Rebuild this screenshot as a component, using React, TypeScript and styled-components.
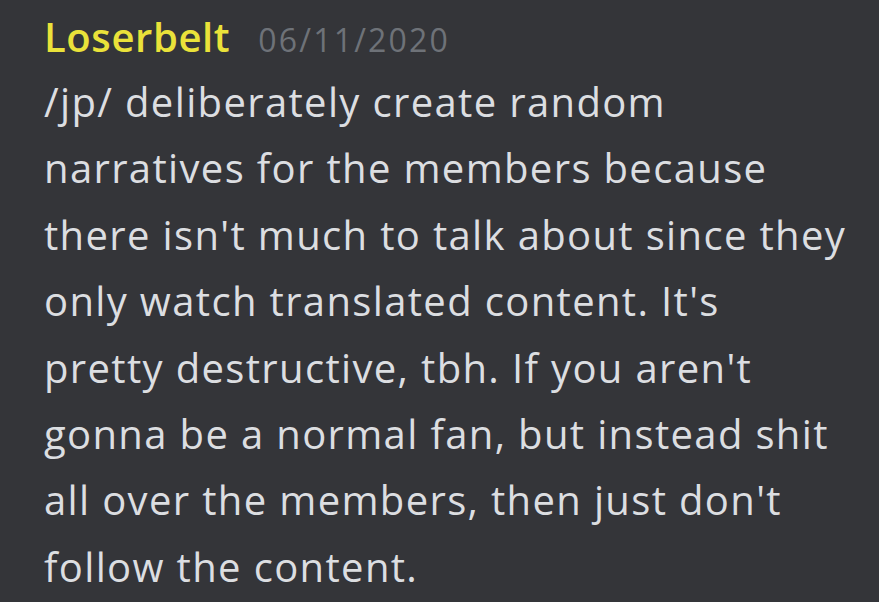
import React from "react";
import styled, { createGlobalStyle } from "styled-components";

const Global = createGlobalStyle`
  html, body { margin: 0; padding: 0; background: #343539; }
  body { width: 879px; height: 602px; overflow: hidden; }
`;

const Message = styled.div`
  box-sizing: border-box;
  width: 879px;
  height: 602px;
  padding: 9px 0 0 44px;
  background: #343539;
  font-family: "Open Sans", Lato, sans-serif;
  font-variant-ligatures: none;
  display: flex;
  flex-direction: column;
`;

const Header = styled.div`
  display: flex;
  align-items: baseline;
  gap: 28px;
  height: 56px;
`;

const Username = styled.span`
  color: #eae23a;
  font-size: 40px;
  font-weight: 600;
  letter-spacing: 0.6px;
`;

const Timestamp = styled.span`
  color: #6e7278;
  font-size: 32px;
  font-weight: 500;
  letter-spacing: 2.2px;
`;

const Body = styled.div`
  color: #dcdee1;
  font-size: 40px;
  font-weight: 500;
  line-height: 66.4px;
  letter-spacing: 1.35px;
  margin-top: 4px;
`;

const Line = styled.div`
  white-space: nowrap;
`;

const lines = [
  "/jp/ deliberately create random",
  "narratives for the members because",
  "there isn't much to talk about since they",
  "only watch translated content. It's",
  "pretty destructive, tbh. If you aren't",
  "gonna be a normal fan, but instead shit",
  "all over the members, then just don't",
  "follow the content.",
];

export default function App() {
  return (
    <>
      <Global />
      <Message>
        <Header>
          <Username>Loserbelt</Username>
          <Timestamp>06/11/2020</Timestamp>
        </Header>
        <Body>
          {lines.map((l, i) => (
            <Line key={i}>{l}</Line>
          ))}
        </Body>
      </Message>
    </>
  );
}
